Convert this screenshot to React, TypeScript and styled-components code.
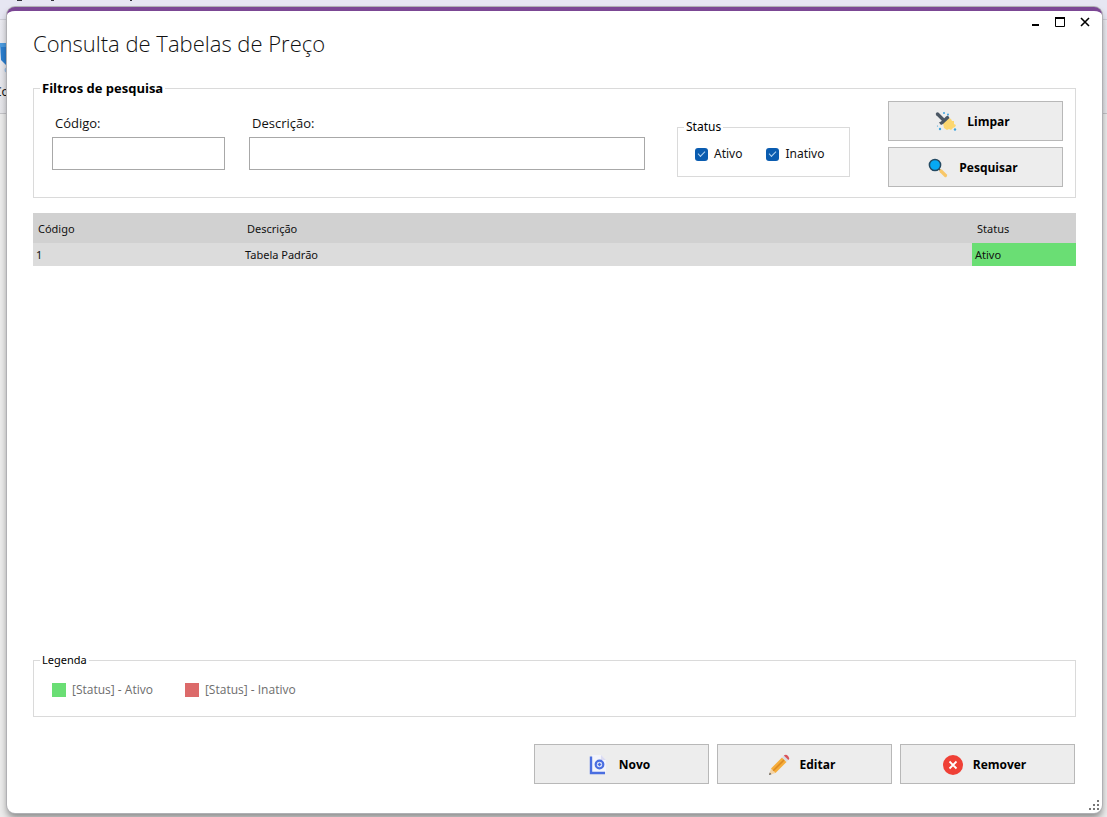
import React from "react";
import styled, { createGlobalStyle, css } from "styled-components";

const GlobalStyle = createGlobalStyle`
  *, *::before, *::after { box-sizing: border-box; }
  body {
    margin: 0;
    background: #ececec;
    color: #111;
    font: 12px/16px "Noto Sans", "Open Sans", sans-serif;
  }
  button, input { font: inherit; color: inherit; }
`;

const Page = styled.div`
  position: relative;
  display: flex;
  min-height: 100vh;
  padding: 7px 5px 4px 7px;
  overflow: hidden;
`;

const Backdrop = styled.div`
  position: absolute;
  inset: 0;
  background: #ececec;
`;

const MenuStrip = styled.div`
  height: 20px;
  background: #e6e6f2;
  border-bottom: 1px solid #cfcfd8;
`;

const MenuMarks = styled.svg`
  display: block;
`;

const ToolStrip = styled.div`
  height: 94px;
  padding-top: 20px;
  background: linear-gradient(#ebebf1, #e6e6ea);
  border-bottom: 1px solid #c4c4c8;
`;

const ToolLabel = styled.div`
  margin: -3px 0 0 -6px;
`;

const Window = styled.main`
  position: relative;
  flex: 1;
  display: flex;
  flex-direction: column;
  min-width: 0;
  padding: 0 26px 29px;
  background: #fff;
  border-top: 4px solid #7b4794;
  border-radius: 8px;
  box-shadow: 0 0 0 1px #b0b0b4, 0 5px 7px #0006;
`;

const WindowControls = styled.div`
  position: absolute;
  top: 0;
  right: 5px;
  display: flex;
`;

const ControlButton = styled.button`
  display: grid;
  place-items: center;
  width: 25px;
  height: 21px;
  padding: 0;
  border: 0;
  background: none;
`;

const Title = styled.h1`
  margin: 16px 0 0;
  font: 300 22px/32px "Open Sans", "Noto Sans", sans-serif;
`;

const Group = styled.fieldset`
  min-width: 0;
  margin: 0;
  padding: 0;
  border: 1px solid #dadada;
`;

const GroupTitle = styled.legend<{ $bold?: boolean }>`
  margin-left: 6px;
  padding: 0 2px;
  color: #000;
  ${(p) => p.$bold && css`font: 700 13px/16px "Open Sans", "Noto Sans", sans-serif;`}
`;

const Filters = styled(Group)`
  margin-top: 21px;
`;

const FilterRow = styled.div`
  display: flex;
  align-items: flex-start;
  padding: 5px 12px 10px 18px;
`;

const Field = styled.div<{ $grow?: boolean }>`
  display: flex;
  flex-direction: column;
  gap: 6px;
  width: 173px;
  margin: 14px 24px 0 0;
  ${(p) => p.$grow && css`flex: 1; margin-right: 32px;`}
`;

const FieldLabel = styled.label`
  padding-left: 3px;
  font: 13px/16px "Open Sans", "Noto Sans", sans-serif;
`;

const TextInput = styled.input`
  width: 100%;
  height: 33px;
  padding: 0 6px;
  border: 1px solid #a8a8a8;
  background: #fff;
`;

const StatusGroup = styled(Group)`
  width: 173px;
  margin: 18px 38px 0 0;
`;

const Checks = styled.div`
  display: flex;
  gap: 24px;
  padding: 11px 17px 14px;
`;

const CheckLabel = styled.label`
  display: flex;
  align-items: center;
  gap: 6px;
`;

const CheckBox = styled.input`
  appearance: none;
  display: grid;
  place-items: center;
  width: 13px;
  height: 13px;
  margin: 0;
  border-radius: 3px;
  background: #0a5cb0;
  &:checked::after {
    content: "";
    width: 7px;
    height: 4px;
    margin-top: -2px;
    border: solid #b5d6f2;
    border-width: 0 0 1px 1px;
    transform: rotate(-45deg);
  }
`;

const ButtonStack = styled.div`
  display: flex;
  flex-direction: column;
  gap: 6px;
`;

const ActionButton = styled.button`
  display: flex;
  align-items: center;
  justify-content: center;
  gap: 10px;
  width: 175px;
  height: 40px;
  padding: 1px 6px 0 0;
  border: 1px solid #b8b8b8;
  background: #ededed;
  color: #000;
  font: 700 12px/16px "Open Sans", "Noto Sans", sans-serif;
`;

const Table = styled.table`
  width: 100%;
  margin-top: 15px;
  border-collapse: collapse;
  table-layout: fixed;
  font-size: 11px;
`;

const HeadCell = styled.th`
  height: 30px;
  padding: 2px 5px 0;
  background: #d1d1d1;
  font-weight: 400;
  text-align: left;
  &:first-child { width: 209px; }
  &:last-child { width: 104px; }
`;

const Cell = styled.td<{ $active?: boolean }>`
  height: 23px;
  padding: 0 3px;
  background: ${(p) => (p.$active ? "#6ade74" : "#dcdcdc")};
`;

const Legend = styled(Group)`
  margin-top: auto;
  font-size: 11px;
`;

const LegendRow = styled.div`
  display: flex;
  gap: 32px;
  padding: 14px 18px 18px;
  color: #6d6d6d;
  font: 12px/16px "Open Sans", "Noto Sans", sans-serif;
`;

const LegendItem = styled.span`
  display: flex;
  align-items: center;
  gap: 6px;
`;

const Swatch = styled.span<{ $color: string }>`
  width: 14px;
  height: 14px;
  background: ${(p) => p.$color};
`;

const Footer = styled.footer`
  display: flex;
  justify-content: flex-end;
  gap: 8px;
  margin: 27px 1px 0 0;
`;

const Grip = styled.svg`
  position: absolute;
  right: 3px;
  bottom: 3px;
`;

const BroomIcon = () => (
  <svg width="22" height="22" viewBox="0 0 22 22" aria-hidden="true">
    <path d="M2.500 3l6 6" stroke="#4b5764" strokeWidth="3.400" strokeLinecap="round" />
    <path d="M8 12l6-5 2 1 1 2 2 0 0 3 2 1-1 2-2 1-2 2-2-1-2 1-3-2z" fill="#fcd770" />
    <path d="M4 11.500l2-1 5-5 2-1 1.500 2.500-6.500 6-2 1z" fill="#4b5764" />
    <g fill="#3fa3dd">
      <circle cx="9" cy="2" r="1" /><circle cx="13" cy="3.500" r="1" /><circle cx="5" cy="18" r="1.200" />
      <circle cx="20" cy="18.500" r="1.200" /><circle cx="2.500" cy="15" r=".6" />
    </g>
  </svg>
);

const SearchIcon = () => (
  <svg width="22" height="22" viewBox="0 0 22 22" aria-hidden="true">
    <path d="M12 12l3 3" stroke="#4b5764" strokeWidth="1.600" />
    <path d="M14 14l4.500 4.500" stroke="#f8c768" strokeWidth="3.200" strokeLinecap="round" />
    <circle cx="8" cy="8" r="5.600" fill="#06a9f4" stroke="#244a63" strokeWidth="1.500" />
  </svg>
);

const NewIcon = () => (
  <svg width="22" height="22" viewBox="0 0 22 22" aria-hidden="true">
    <path d="M5 1h9l5 5v12H5z" fill="#f3f4fb" />
    <path d="M14 1v5h5z" fill="#dcdcf2" />
    <path d="M4 2.500v16.500h14" fill="none" stroke="#4a6ee0" strokeWidth="2.400" />
    <circle cx="12.500" cy="10.500" r="3.800" fill="#e9edfb" stroke="#4a6ee0" strokeWidth="2.200" />
    <path d="M12.500 8.700v3.600M10.700 10.500h3.600" stroke="#4a6ee0" strokeWidth="1.500" />
  </svg>
);

const PencilIcon = () => (
  <svg width="22" height="22" viewBox="0 0 22 22" aria-hidden="true">
    <path d="M1 21l2-6.500 4.500 4.500z" fill="#f3d3a6" />
    <path d="M1 21l.8-2.400 1.600 1.600z" fill="#555" />
    <path d="M3 14.500L14 3.500l4.500 4.500L7.500 19z" fill="#f5ad3c" />
    <path d="M5.200 16.800L16.200 5.800" stroke="#dd8b22" strokeWidth="1.600" />
    <path d="M14 3.500l2-2 4.500 4.500-2 2z" fill="#d9dde2" />
    <path d="M15.800 1.600q2.200-1.700 4.200.3t.4 4.200z" fill="#d9545b" />
  </svg>
);

const RemoveIcon = () => (
  <svg width="20" height="20" viewBox="0 0 20 20" aria-hidden="true">
    <circle cx="10" cy="10" r="10" fill="#ef4036" />
    <path d="M6.500 6.500l7 7M13.500 6.500l-7 7" stroke="#fff" strokeWidth="1.800" />
  </svg>
);

const CartIcon = () => (
  <svg width="12" height="43" viewBox="0 0 12 43" aria-hidden="true">
    <path d="M0 3h12v24H8L1 20z" fill="#2b7fd0" />
    <path d="M0 3h12v4H0z" fill="#4c9ce0" />
    <circle cx="7" cy="30" r="2.500" fill="#9fc3e8" />
  </svg>
);

const rows = [{ code: "1", description: "Tabela Padrão", active: true }];

export default function App() {
  return (
    <Page>
      <GlobalStyle />
      <Backdrop>
        <MenuStrip>
          <MenuMarks width="140" height="2" fill="none" stroke="#33333c" aria-hidden="true">
            <path d="M17 .5h5M51 .5h3M130 .5h2" />
          </MenuMarks>
        </MenuStrip>
        <ToolStrip>
          <CartIcon />
          <ToolLabel>Co</ToolLabel>
        </ToolStrip>
      </Backdrop>
      <Window>
        <WindowControls>
          <ControlButton aria-label="Minimizar">
            <svg width="12" height="12"><path d="M3 9h7" stroke="#000" strokeWidth="2" /></svg>
          </ControlButton>
          <ControlButton aria-label="Maximizar">
            <svg width="12" height="12" fill="none" stroke="#000"><path d="M1.500 2v8.500h9V2" /><path d="M1 2h10" strokeWidth="2" /></svg>
          </ControlButton>
          <ControlButton aria-label="Fechar">
            <svg width="12" height="12"><path d="M2 2l8 8M10 2l-8 8" stroke="#000" strokeWidth="1.600" /></svg>
          </ControlButton>
        </WindowControls>

        <Title>Consulta de Tabelas de Preço</Title>

        <Filters>
          <GroupTitle $bold>Filtros de pesquisa</GroupTitle>
          <FilterRow>
            <Field>
              <FieldLabel htmlFor="codigo">Código:</FieldLabel>
              <TextInput id="codigo" />
            </Field>
            <Field $grow>
              <FieldLabel htmlFor="descricao">Descrição:</FieldLabel>
              <TextInput id="descricao" />
            </Field>
            <StatusGroup>
              <GroupTitle>Status</GroupTitle>
              <Checks>
                <CheckLabel><CheckBox type="checkbox" defaultChecked />Ativo</CheckLabel>
                <CheckLabel><CheckBox type="checkbox" defaultChecked />Inativo</CheckLabel>
              </Checks>
            </StatusGroup>
            <ButtonStack>
              <ActionButton><BroomIcon />Limpar</ActionButton>
              <ActionButton><SearchIcon />Pesquisar</ActionButton>
            </ButtonStack>
          </FilterRow>
        </Filters>

        <Table>
          <thead>
            <tr>
              <HeadCell>Código</HeadCell>
              <HeadCell>Descrição</HeadCell>
              <HeadCell>Status</HeadCell>
            </tr>
          </thead>
          <tbody>
            {rows.map((row) => (
              <tr key={row.code}>
                <Cell>{row.code}</Cell>
                <Cell>{row.description}</Cell>
                <Cell $active={row.active}>{row.active ? "Ativo" : "Inativo"}</Cell>
              </tr>
            ))}
          </tbody>
        </Table>

        <Legend>
          <GroupTitle>Legenda</GroupTitle>
          <LegendRow>
            <LegendItem><Swatch $color="#6ade74" />[Status] - Ativo</LegendItem>
            <LegendItem><Swatch $color="#dc6a6a" />[Status] - Inativo</LegendItem>
          </LegendRow>
        </Legend>

        <Footer>
          <ActionButton><NewIcon />Novo</ActionButton>
          <ActionButton><PencilIcon />Editar</ActionButton>
          <ActionButton><RemoveIcon />Remover</ActionButton>
        </Footer>

        <Grip width="10" height="10" viewBox="0 0 10 10" fill="#777" aria-hidden="true">
          <path d="M8 0h2v2H8zM4 4h2v2H4zM8 4h2v2H8zM0 8h2v2H0zM4 8h2v2H4zM8 8h2v2H8z" />
        </Grip>
      </Window>
    </Page>
  );
}
